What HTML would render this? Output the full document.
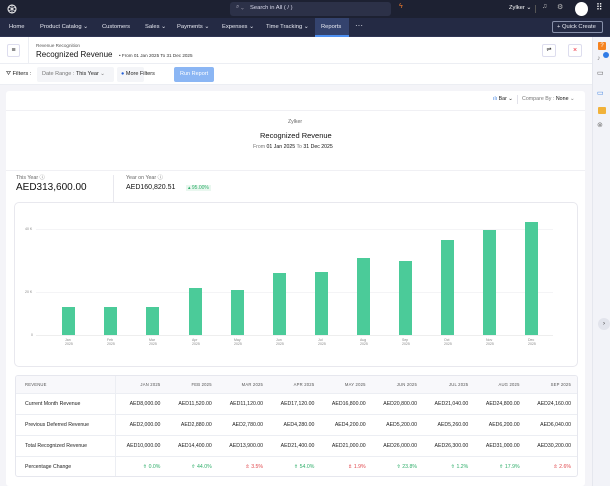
<!DOCTYPE html>
<html><head><style>
*{box-sizing:border-box;margin:0;padding:0}
body{width:610px;height:486px;overflow:hidden;font-family:"Liberation Sans",sans-serif;background:#f4f4f8;position:relative;color:#222}
.abs{position:absolute}
.top{left:0;top:0;width:610px;height:18px;background:#1d2132}
.nav{left:0;top:18px;width:610px;height:19px;background:#242a44;border-bottom:1px solid #2f3554}
.nav span{position:absolute;top:5.5px;font-size:5.8px;color:#e8eaf2;white-space:nowrap}
.hdr{left:0;top:37px;width:592px;height:27px;background:#fff;border-bottom:1px solid #eceef3}
.flt{left:0;top:64px;width:592px;height:21px;background:#fff;border-bottom:1px solid #eceef3}
.side{left:592px;top:37px;width:18px;height:449px;background:#f2f3f8;border-left:1px solid #e5e7ee}
.card{left:6px;top:91px;width:579px;height:395px;background:#fff;border-radius:3px}
.t{position:absolute;white-space:nowrap}
.bar{position:absolute;width:13px;background:#4bcb99}
table{border-collapse:collapse;font-size:5.2px}
td{height:21px;border-bottom:1px solid #eceef3;text-align:right;padding-right:6px;width:51.5px}
td:first-child{text-align:left;padding-left:9px;width:100px;border-right:1px solid #eceef3}
tr.h td{height:17px;font-size:4.2px;color:#555;background:#f8f8fb;letter-spacing:.2px}
.g{color:#2fae6a}.r{color:#e0474c}
</style></head><body>
<div class="abs top">
 <svg class="abs" style="left:7px;top:4px" width="10" height="10" viewBox="0 0 10 10"><circle cx="5" cy="5" r="4" fill="none" stroke="#fff" stroke-width="1"/><path d="M2 3L8 7M2 7L8 3M5 1V9" stroke="#fff" stroke-width=".7"/></svg>
 <div class="abs" style="left:230px;top:2px;width:161px;height:14px;background:#2c3148;border-radius:3px"></div>
 <span class="t" style="left:236px;top:4px;font-size:6px;color:#aab">⌕ ⌄</span>
 <span class="t" style="left:250px;top:4.5px;font-size:5.8px;color:#dde">Search in All ( / )</span>
 <span class="t" style="left:399px;top:3px;font-size:7px;color:#f07a2c">ϟ</span>
 <span class="t" style="left:509px;top:5px;font-size:5.8px;color:#fff">Zylker ⌄</span>
 <div class="abs" style="left:535px;top:5px;width:1px;height:8px;background:#555"></div>
 <span class="t" style="left:542px;top:3px;font-size:7px;color:#bbb">♫</span>
 <span class="t" style="left:557px;top:3px;font-size:7px;color:#bbb">⚙</span>
 <div class="abs" style="left:575px;top:2px;width:13px;height:14px;border-radius:50%;background:#fff"></div>
 <span class="t" style="left:596px;top:2px;font-size:9px;color:#fff">⠿</span>
</div>
<div class="abs nav">
 <span style="left:9px">Home</span><span style="left:40px">Product Catalog ⌄</span><span style="left:102px">Customers</span><span style="left:145px">Sales ⌄</span><span style="left:177px">Payments ⌄</span><span style="left:222px">Expenses ⌄</span><span style="left:266px">Time Tracking ⌄</span>
 <div class="abs" style="left:315px;top:0;width:34px;height:19px;background:#34436e;border-bottom:2px solid #4d8ff0"></div>
 <span style="left:321px">Reports</span><span style="left:355px;top:3px;font-size:8px">···</span>
 <div class="abs" style="left:552px;top:3px;width:51px;height:12px;border:1px solid #8890aa;border-radius:2px"></div>
 <span style="left:557px;top:5.5px;font-size:5.8px">+ Quick Create</span>
</div>
<div class="abs hdr">
 <div class="abs" style="left:7px;top:7px;width:13px;height:13px;border:1px solid #dde;border-radius:2px;font-size:7px;text-align:center;line-height:11px">≡</div>
 <div class="abs" style="left:28px;top:0;width:1px;height:27px;background:#eceef3"></div>
 <span class="t" style="left:36px;top:6px;font-size:4.6px;color:#555">Revenue Recognition</span>
 <span class="t" style="left:36px;top:13px;font-size:8px;color:#111">Recognized Revenue</span>
 <span class="t" style="left:119px;top:16px;font-size:4.6px;color:#333">• From 01 Jan 2025 To 31 Dec 2025</span>
 <div class="abs" style="left:542px;top:7px;width:14px;height:13px;border:1px solid #dde;border-radius:2px;font-size:6px;text-align:center;line-height:11px">⇌</div>
 <div class="abs" style="left:568px;top:7px;width:14px;height:13px;border:1px solid #dde;border-radius:2px;font-size:7px;text-align:center;line-height:11px;color:#e23">×</div>
</div>
<div class="abs flt">
 <span class="t" style="left:6px;top:7px;font-size:5.8px">⛛ Filters :</span>
 <div class="abs" style="left:37px;top:3px;width:77px;height:15px;background:#f4f5f8;border-radius:2px"></div>
 <span class="t" style="left:42px;top:7px;font-size:5.5px;color:#777">Date Range : <b style="font-weight:normal;color:#222">This Year</b> ⌄</span>
 <div class="abs" style="left:117px;top:3px;width:27px;height:15px;background:#f4f5f8;border-radius:2px"></div>
 <span class="t" style="left:121px;top:7px;font-size:5.5px"><span style="color:#2560d8">●</span> More Filters</span>
 <div class="abs" style="left:174px;top:3px;width:40px;height:15px;background:#8bb6f4;border-radius:2px"></div>
 <span class="t" style="left:180px;top:7px;font-size:5.5px;color:#fff">Run Report</span>
</div>
<div class="abs side">
 <div class="abs" style="left:5px;top:5px;width:8px;height:8px;background:#f5821f;border-radius:1px;color:#fff;font-size:6px;text-align:center;line-height:8px">?</div>
 <span class="t" style="left:4px;top:18px;font-size:7px;color:#888">♪</span>
 <div class="abs" style="left:10px;top:15px;width:6px;height:6px;background:#2f7be6;border-radius:50%"></div>
 <span class="t" style="left:4px;top:32px;font-size:7px;color:#555">▭</span>
 <span class="t" style="left:4px;top:52px;font-size:7px;color:#3a7fe0">▭</span>
 <div class="abs" style="left:5px;top:70px;width:8px;height:7px;background:#f1b23a;border-radius:1px"></div>
 <span class="t" style="left:4px;top:84px;font-size:7px;color:#777">⊗</span>
 <div class="abs" style="left:5px;top:281px;width:12px;height:12px;background:#e2e4ec;border-radius:50%;font-size:6px;text-align:center;line-height:12px;color:#333">›</div>
</div>
<div class="abs card">
 <span class="t" style="left:487px;top:5px;font-size:5.3px;color:#222"><span style="color:#3a7fe0">ılı</span> Bar ⌄</span>
 <div class="abs" style="left:511px;top:4px;width:1px;height:9px;background:#e2e2ea"></div>
 <span class="t" style="left:516px;top:5px;font-size:5.3px;color:#777">Compare By : <span style="color:#111">None</span> ⌄</span>
 <div class="abs" style="left:0;top:19px;width:579px;height:1px;background:#f0f0f4"></div>
 <span class="t" style="left:282px;top:28px;font-size:5.2px;color:#666">Zylker</span>
 <span class="t" style="left:254px;top:40px;font-size:7.5px;color:#111">Recognized Revenue</span>
 <span class="t" style="left:247px;top:53px;font-size:5.2px;color:#777">From <span style="color:#111">01 Jan 2025</span> To <span style="color:#111">31 Dec 2025</span></span>
 <div class="abs" style="left:0;top:79px;width:579px;height:1px;background:#f0f0f4"></div>
 <span class="t" style="left:10px;top:82px;font-size:5.3px;color:#666">This Year ⓘ</span>
 <span class="t" style="left:10px;top:91px;font-size:10px;color:#111">AED313,600.00</span>
 <div class="abs" style="left:107px;top:84px;width:1px;height:28px;background:#e8e8ee"></div>
 <span class="t" style="left:120px;top:82px;font-size:5.3px;color:#666">Year on Year ⓘ</span>
 <span class="t" style="left:120px;top:93px;font-size:7px;color:#111">AED160,820.51</span>
 <span class="t" style="left:180px;top:94px;font-size:5px;color:#2fae6a;background:#e9f7ef;padding:0 2px">▴ 95.00%</span>
</div>
<div class="abs" style="left:14px;top:202px;width:564px;height:165px;border:1px solid #e8e8ee;border-radius:5px;background:#fff"></div>
<div class="abs" style="left:36px;top:229px;width:517px;height:1px;background:#f4f4f6"></div>
<div class="abs" style="left:36px;top:292px;width:517px;height:1px;background:#f4f4f6"></div>
<div class="abs" style="left:36px;top:335px;width:517px;height:1px;background:#eee"></div>
<span class="t" style="left:25px;top:227px;font-size:3.5px;color:#888">40 K</span>
<span class="t" style="left:25px;top:290px;font-size:3.5px;color:#888">20 K</span>
<span class="t" style="left:31px;top:333px;font-size:3.5px;color:#888">0</span>
<div class="bar" style="left:62px;top:307px;height:28px"></div>
<div class="bar" style="left:104px;top:307px;height:28px"></div>
<div class="bar" style="left:146px;top:307px;height:28px"></div>
<div class="bar" style="left:189px;top:288px;height:47px"></div>
<div class="bar" style="left:231px;top:290px;height:45px"></div>
<div class="bar" style="left:273px;top:273px;height:62px"></div>
<div class="bar" style="left:315px;top:272px;height:63px"></div>
<div class="bar" style="left:357px;top:258px;height:77px"></div>
<div class="bar" style="left:399px;top:261px;height:74px"></div>
<div class="bar" style="left:441px;top:240px;height:95px"></div>
<div class="bar" style="left:483px;top:230px;height:105px"></div>
<div class="bar" style="left:525px;top:222px;height:113px"></div>
<div class="abs" style="left:0;top:338px;font-size:3.5px;color:#888;line-height:4px">
<span class="t" style="left:65px">Jan<br>2025</span><span class="t" style="left:107px">Feb<br>2025</span><span class="t" style="left:149px">Mar<br>2025</span><span class="t" style="left:192px">Apr<br>2025</span><span class="t" style="left:234px">May<br>2025</span><span class="t" style="left:276px">Jun<br>2025</span><span class="t" style="left:318px">Jul<br>2025</span><span class="t" style="left:360px">Aug<br>2025</span><span class="t" style="left:402px">Sep<br>2025</span><span class="t" style="left:444px">Oct<br>2025</span><span class="t" style="left:486px">Nov<br>2025</span><span class="t" style="left:528px">Dec<br>2025</span>
</div>
<div class="abs" style="left:15px;top:375px;width:563px;height:102px;border:1px solid #e6e7ee;border-radius:3px;overflow:hidden;background:#fff">
<table>
<tr class="h"><td>REVENUE</td><td>JAN 2025</td><td>FEB 2025</td><td>MAR 2025</td><td>APR 2025</td><td>MAY 2025</td><td>JUN 2025</td><td>JUL 2025</td><td>AUG 2025</td><td>SEP 2025</td></tr>
<tr><td>Current Month Revenue</td><td>AED8,000.00</td><td>AED11,520.00</td><td>AED11,120.00</td><td>AED17,120.00</td><td>AED16,800.00</td><td>AED20,800.00</td><td>AED21,040.00</td><td>AED24,800.00</td><td>AED24,160.00</td></tr>
<tr><td>Previous Deferred Revenue</td><td>AED2,000.00</td><td>AED2,880.00</td><td>AED2,780.00</td><td>AED4,280.00</td><td>AED4,200.00</td><td>AED5,200.00</td><td>AED5,260.00</td><td>AED6,200.00</td><td>AED6,040.00</td></tr>
<tr><td>Total Recognized Revenue</td><td>AED10,000.00</td><td>AED14,400.00</td><td>AED13,900.00</td><td>AED21,400.00</td><td>AED21,000.00</td><td>AED26,000.00</td><td>AED26,300.00</td><td>AED31,000.00</td><td>AED30,200.00</td></tr>
<tr><td>Percentage Change</td><td class="g">⇮ 0.0%</td><td class="g">⇮ 44.0%</td><td class="r">⇯ 3.5%</td><td class="g">⇮ 54.0%</td><td class="r">⇯ 1.9%</td><td class="g">⇮ 23.8%</td><td class="g">⇮ 1.2%</td><td class="g">⇮ 17.9%</td><td class="r">⇯ 2.6%</td></tr>
</table></div>
</body></html>
